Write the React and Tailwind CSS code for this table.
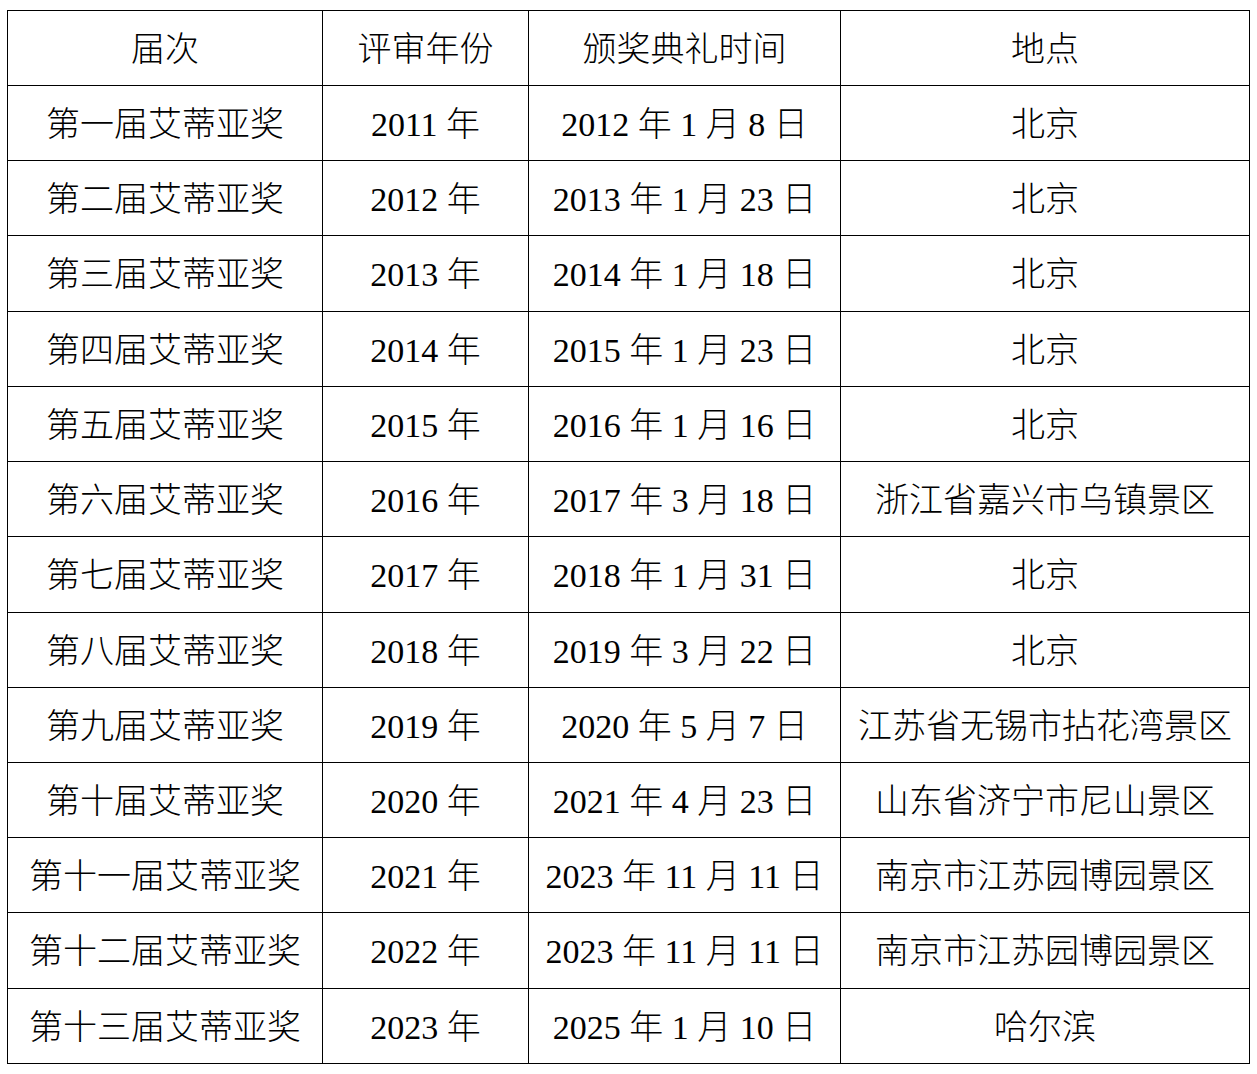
const rows = [
  ["第一届艾蒂亚奖", "2011 年", "2012 年 1 月 8 日", "北京"],
  ["第二届艾蒂亚奖", "2012 年", "2013 年 1 月 23 日", "北京"],
  ["第三届艾蒂亚奖", "2013 年", "2014 年 1 月 18 日", "北京"],
  ["第四届艾蒂亚奖", "2014 年", "2015 年 1 月 23 日", "北京"],
  ["第五届艾蒂亚奖", "2015 年", "2016 年 1 月 16 日", "北京"],
  ["第六届艾蒂亚奖", "2016 年", "2017 年 3 月 18 日", "浙江省嘉兴市乌镇景区"],
  ["第七届艾蒂亚奖", "2017 年", "2018 年 1 月 31 日", "北京"],
  ["第八届艾蒂亚奖", "2018 年", "2019 年 3 月 22 日", "北京"],
  ["第九届艾蒂亚奖", "2019 年", "2020 年 5 月 7 日", "江苏省无锡市拈花湾景区"],
  ["第十届艾蒂亚奖", "2020 年", "2021 年 4 月 23 日", "山东省济宁市尼山景区"],
  ["第十一届艾蒂亚奖", "2021 年", "2023 年 11 月 11 日", "南京市江苏园博园景区"],
  ["第十二届艾蒂亚奖", "2022 年", "2023 年 11 月 11 日", "南京市江苏园博园景区"],
  ["第十三届艾蒂亚奖", "2023 年", "2025 年 1 月 10 日", "哈尔滨"],
];

const header = ["届次", "评审年份", "颁奖典礼时间", "地点"];

export default function App() {
  const all = [header, ...rows];
  return (
    <div className="w-[1257px] h-[1074px] bg-white pt-[10px] pl-[7px]">
      <div
        className="grid w-max border-l border-t border-black text-black text-[34px] leading-none font-light grid-cols-[315px_206px_312px_409px] grid-rows-[75px_75px_75px_76px_75px_75px_75px_76px_75px_75px_75px_75px_76px_75px]"
        style={{ fontFamily: "'Liberation Serif', 'Noto Sans CJK SC', serif" }}
      >
        {all.map((r, i) =>
          r.map((c, j) => (
            <div
              key={i + "-" + j}
              className="flex items-center justify-center border-r border-b border-black whitespace-nowrap pt-[3px]"
            >
              {c}
            </div>
          ))
        )}
      </div>
    </div>
  );
}
